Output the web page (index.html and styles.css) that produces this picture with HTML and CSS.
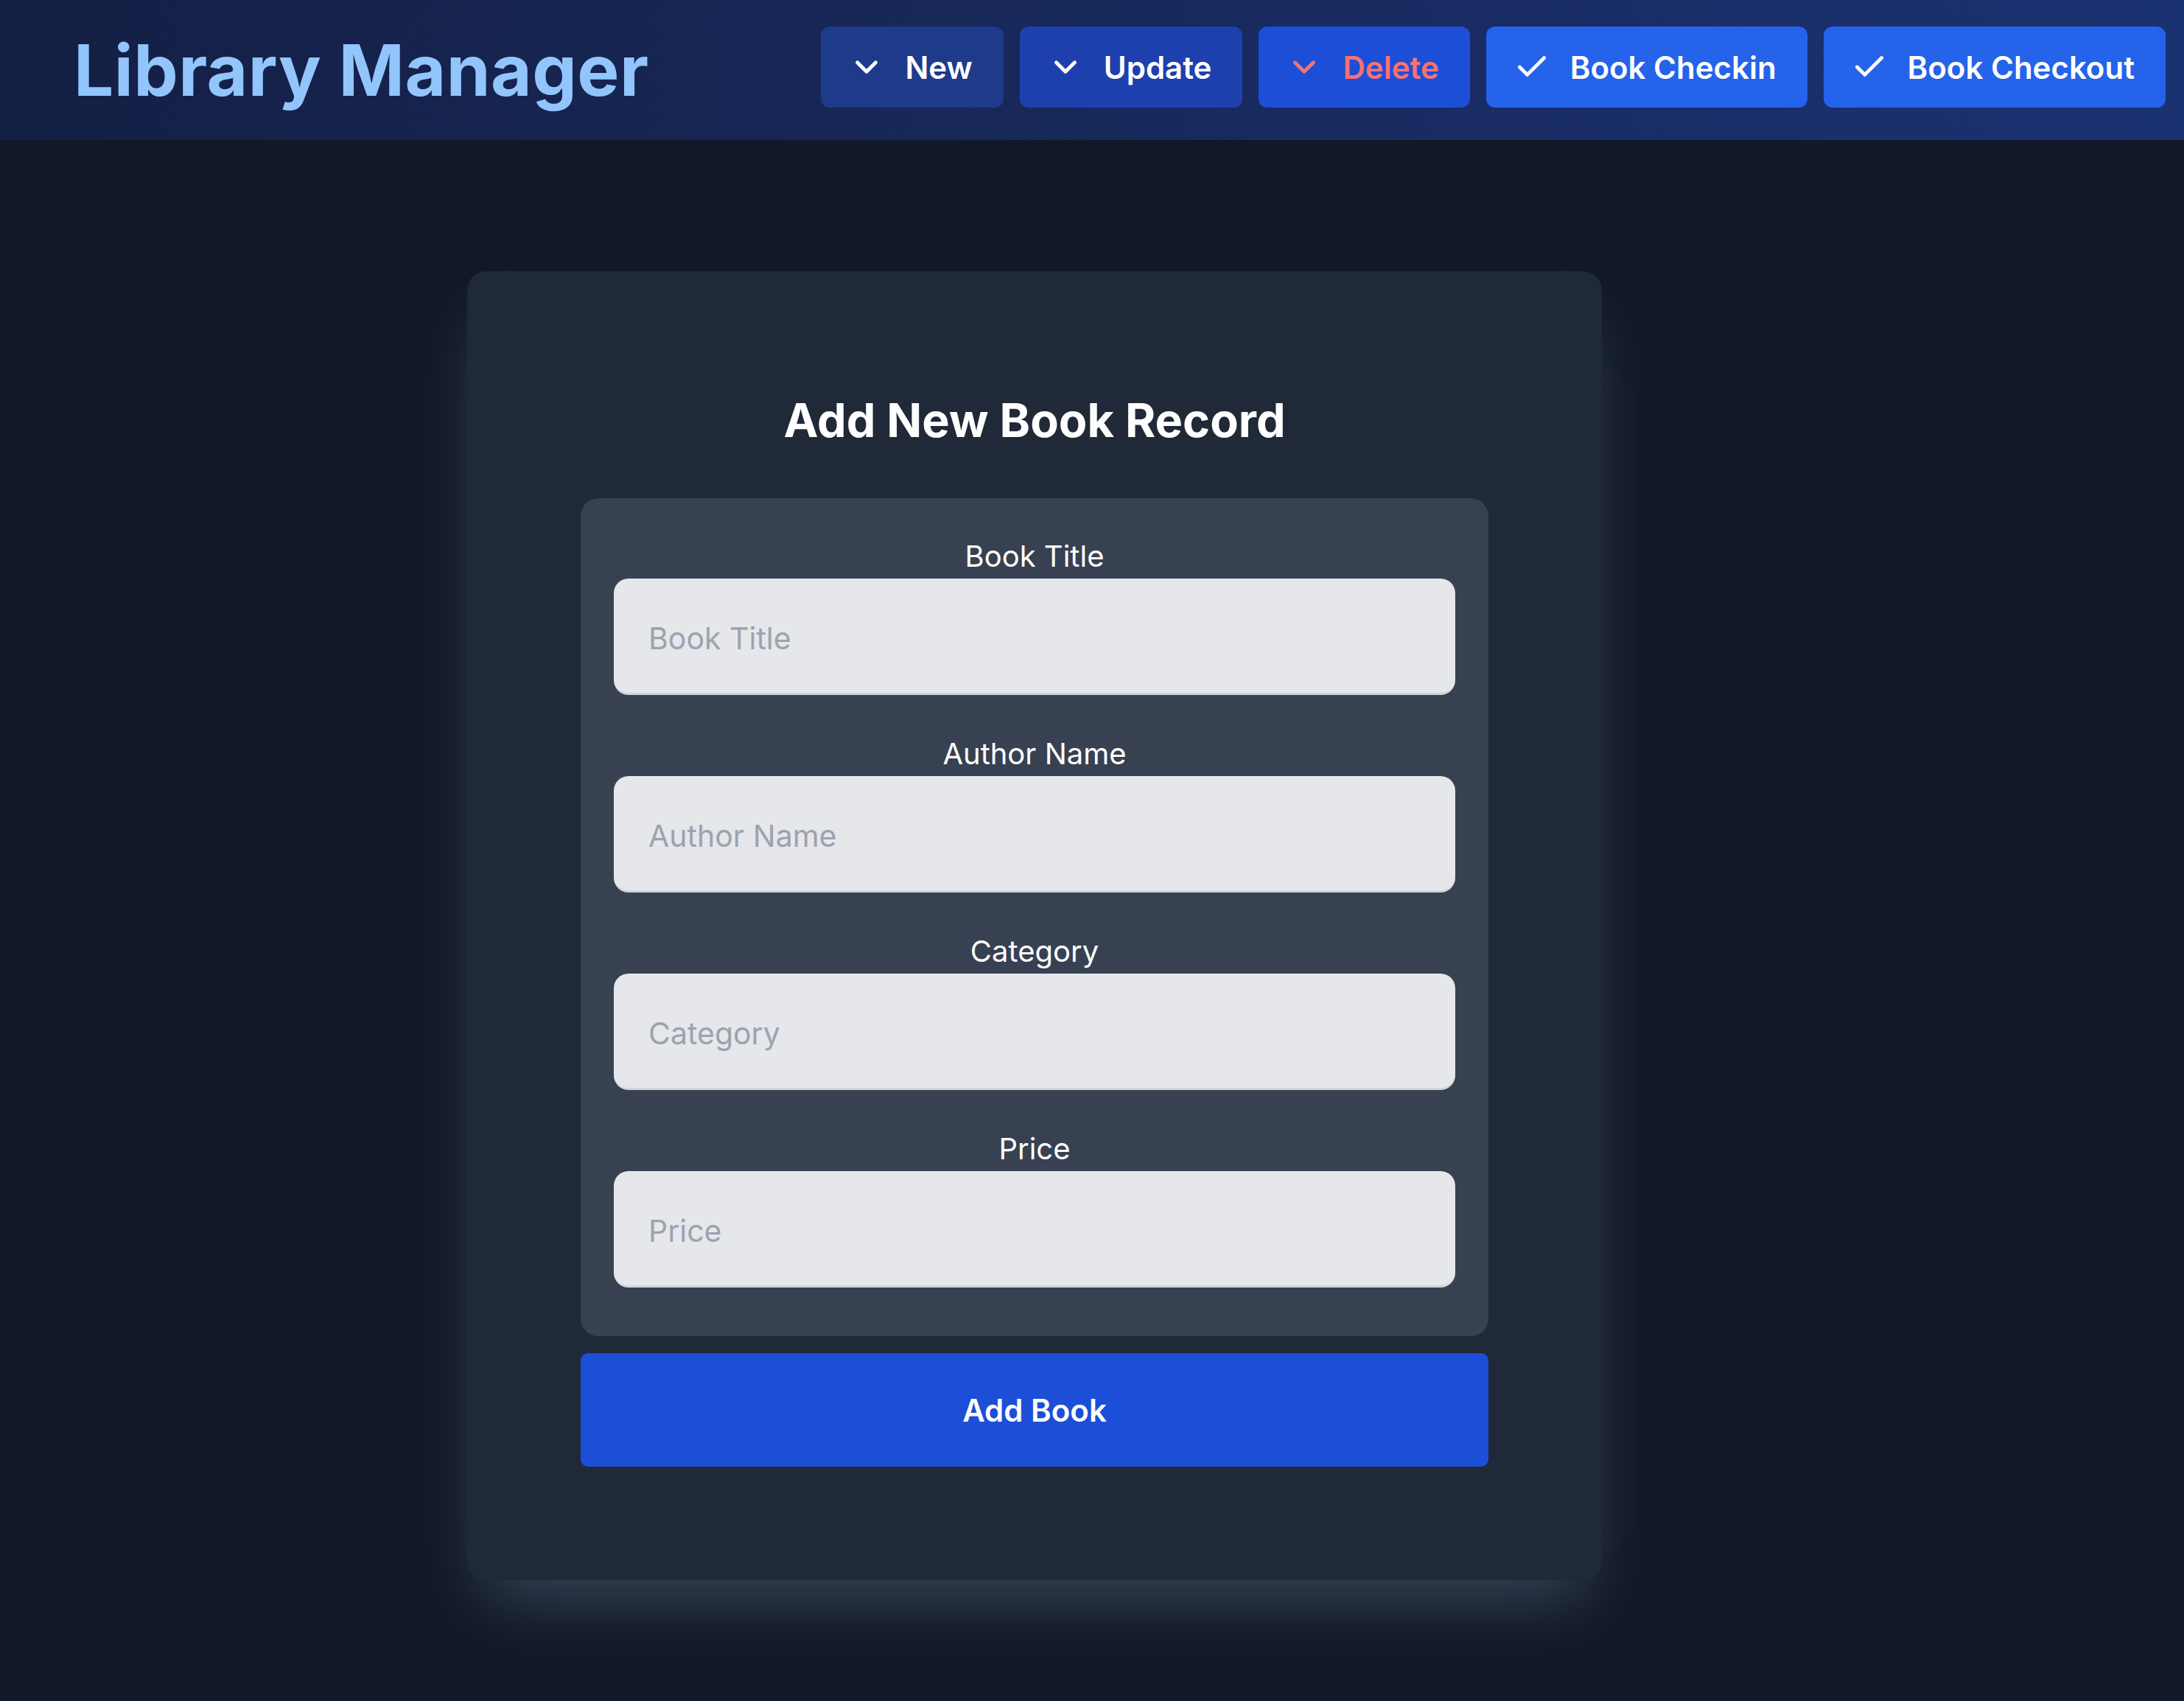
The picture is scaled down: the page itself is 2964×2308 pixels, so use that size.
FILE: index.html
```html
<!DOCTYPE html>
<html lang="en">
<head>
<meta charset="utf-8">
<title>Library Manager</title>
<link rel="stylesheet" href="styles.css">
</head>
<body>
<header class="topbar">
  <h1 class="brand">Library Manager</h1>
  <nav class="actions">
    <button class="act act-new"><svg class="ico" viewBox="0 0 24 24"><polyline points="6 9 12 15 18 9"/></svg><span>New</span></button>
    <button class="act act-update"><svg class="ico" viewBox="0 0 24 24"><polyline points="6 9 12 15 18 9"/></svg><span>Update</span></button>
    <button class="act act-delete"><svg class="ico" viewBox="0 0 24 24"><polyline points="6 9 12 15 18 9"/></svg><span>Delete</span></button>
    <button class="act act-check"><svg class="ico" viewBox="0 0 24 24"><polyline points="20 6 9 17 4 12"/></svg><span>Book Checkin</span></button>
    <button class="act act-check"><svg class="ico" viewBox="0 0 24 24"><polyline points="20 6 9 17 4 12"/></svg><span>Book Checkout</span></button>
  </nav>
</header>
<main class="main">
  <section class="card">
    <h2 class="card-title">Add New Book Record</h2>
    <form class="form">
      <div class="fields">
        <label class="field"><span class="field-label">Book Title</span><input class="field-input" type="text" placeholder="Book Title"></label>
        <label class="field"><span class="field-label">Author Name</span><input class="field-input" type="text" placeholder="Author Name"></label>
        <label class="field"><span class="field-label">Category</span><input class="field-input" type="text" placeholder="Category"></label>
        <label class="field"><span class="field-label">Price</span><input class="field-input" type="text" placeholder="Price"></label>
      </div>
      <button class="submit" type="button">Add Book</button>
    </form>
  </section>
</main>
</body>
</html>
```
FILE: styles.css
```css
* { box-sizing: border-box; }
html, body { margin: 0; padding: 0; }
body {
  background: #111827;
  font-family: Inter, "Noto Sans", "Liberation Sans", sans-serif;
  min-height: 2308px;
  color: #fff;
}
.topbar {
  height: 190px;
  display: flex;
  align-items: center;
  justify-content: space-between;
  padding: 0 25px 0 100px;
  background: linear-gradient(to right, #141f44, #1b3272);
}
.brand {
  margin: 0;
  font-size: 96px;
  font-weight: 700;
  color: #93c5fd;
  line-height: 1;
  letter-spacing: 0.5px;
}
.actions {
  display: flex;
  gap: 22px;
  margin-top: -8px;
}
.act {
  height: 110px;
  display: flex;
  align-items: center;
  gap: 27px;
  padding: 0 42px 0 37px;
  border: 0;
  border-radius: 12px;
  font-family: inherit;
  font-size: 42px;
  font-weight: 600;
  color: #fff;
}
.ico {
  width: 50px;
  height: 50px;
  fill: none;
  stroke: currentColor;
  stroke-width: 2.3;
  stroke-linecap: round;
  stroke-linejoin: round;
}
.act-new { background: #1e3a8a; }
.act-update { background: #1e40af; }
.act-delete { background: #1d4ed8; color: #f87171; }
.act-check { background: #2563eb; }
.main {
  padding: 178px 0 0 634px;
}
.card {
  width: 1540px;
  background: #1f2937;
  border-radius: 26px;
  padding: 154px;
  box-shadow: 0 47px 94px -23px rgba(71, 85, 105, 0.75);
}
.card-title {
  margin: 0 0 58px;
  font-size: 63px;
  line-height: 96px;
  font-weight: 700;
  text-align: center;
}
.form {
  display: flex;
  flex-direction: column;
  gap: 23px;
}
.fields {
  background: #374151;
  border-radius: 24px;
  padding: 49px 45px 66px;
  display: flex;
  flex-direction: column;
  gap: 50px;
}
.field {
  display: flex;
  flex-direction: column;
  align-items: stretch;
}
.field-label {
  font-size: 40px;
  line-height: 60px;
  font-weight: 400;
  text-align: center;
  color: #fff;
}
.field-input {
  height: 158px;
  width: 100%;
  border: 0;
  border-bottom: 3px solid #d1d5db;
  border-radius: 20px;
  background: #e5e7eb;
  padding: 6px 47px 0;
  font-family: inherit;
  font-size: 41px;
  color: #111827;
  outline: none;
}
.field-input::placeholder { color: #9ca3af; }
.submit {
  height: 154px;
  border: 0;
  border-radius: 10px;
  background: #1d4ed8;
  color: #fff;
  font-family: inherit;
  font-size: 42px;
  font-weight: 600;
}
```
